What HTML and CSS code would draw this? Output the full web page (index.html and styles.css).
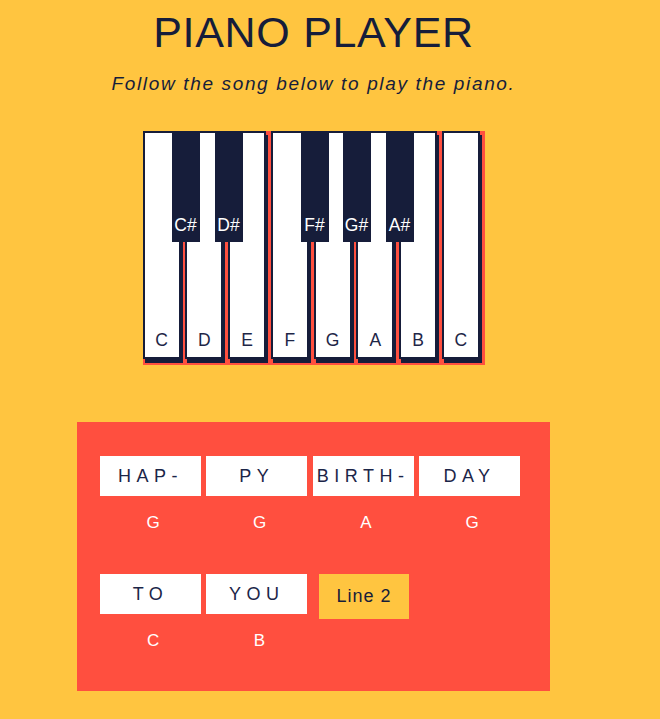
FILE: index.html
```html
<!DOCTYPE html>
<html lang="en">
<head>
<meta charset="utf-8">
<title>Piano Player</title>
<link rel="stylesheet" href="styles.css">
</head>
<body>
<main class="app">
  <h1 class="title">PIANO PLAYER</h1>
  <p class="subtitle">Follow the song below to play the piano.</p>
  <div class="piano">
    <div class="white-key"><span>C</span></div>
    <div class="white-key"><span>D</span></div>
    <div class="white-key"><span>E</span></div>
    <div class="white-key"><span>F</span></div>
    <div class="white-key"><span>G</span></div>
    <div class="white-key"><span>A</span></div>
    <div class="white-key"><span>B</span></div>
    <div class="white-key"><span>C</span></div>
    <div class="black-key key-cs"><span>C#</span></div>
    <div class="black-key key-ds"><span>D#</span></div>
    <div class="black-key key-fs"><span>F#</span></div>
    <div class="black-key key-gs"><span>G#</span></div>
    <div class="black-key key-as"><span>A#</span></div>
  </div>
  <section class="song">
    <div class="line">
      <div class="col"><div class="word">HAP-</div><div class="note">G</div></div>
      <div class="col"><div class="word">PY</div><div class="note">G</div></div>
      <div class="col"><div class="word">BIRTH-</div><div class="note">A</div></div>
      <div class="col"><div class="word">DAY</div><div class="note">G</div></div>
    </div>
    <div class="line">
      <div class="col"><div class="word">TO</div><div class="note">C</div></div>
      <div class="col"><div class="word">YOU</div><div class="note">B</div></div>
      <button class="next-btn" type="button">Line 2</button>
    </div>
  </section>
</main>
</body>
</html>
```
FILE: styles.css
```css
body {
  margin: 0;
  background: #ffc540;
  font-family: "Liberation Sans", Arial, sans-serif;
  color: #161d3a;
}

.app {
  width: 627px;
  padding-top: 8px;
  display: flex;
  flex-direction: column;
  align-items: center;
}

.title {
  margin: 0;
  font-size: 43px;
  font-weight: normal;
  line-height: 49px;
  letter-spacing: 0.7px;
}

.subtitle {
  margin: 16px 0 0;
  font-size: 19px;
  font-style: italic;
  line-height: 22px;
  letter-spacing: 1.65px;
}

.piano {
  position: relative;
  margin-top: 36px;
  width: 342px;
  height: 234px;
  background: #ff4f3f;
  display: flex;
  align-items: flex-start;
}

.white-key {
  box-sizing: border-box;
  flex-shrink: 0;
  width: 38px;
  height: 228px;
  margin-right: 4.75px;
  background: #fff;
  border: 2px solid #161d3a;
  box-shadow: 2px 4px 0 #161d3a;
  display: flex;
  align-items: flex-end;
  justify-content: center;
  padding-bottom: 7px;
  font-size: 17.5px;
  line-height: 20px;
  color: #1e2647;
}

.black-key {
  position: absolute;
  top: 0;
  box-sizing: border-box;
  width: 28px;
  height: 111px;
  background: #161d3a;
  color: #fff;
  display: flex;
  align-items: flex-end;
  justify-content: center;
  padding-bottom: 7px;
  font-size: 17.5px;
  line-height: 20px;
}

.key-cs { left: 29px; }
.key-ds { left: 72px; }
.key-fs { left: 158px; }
.key-gs { left: 200px; }
.key-as { left: 243px; }

.song {
  box-sizing: border-box;
  margin-top: 57px;
  width: 473px;
  height: 269px;
  background: #ff4f3f;
  padding: 34px 0 0 23px;
}

.line {
  display: flex;
  align-items: flex-start;
  height: 118px;
}

.col {
  width: 106.33px;
  flex-shrink: 0;
}

.word {
  width: 101px;
  height: 40px;
  background: #fff;
  display: flex;
  align-items: center;
  justify-content: center;
  font-size: 18px;
  letter-spacing: 5.5px;
  color: #1b2548;
}

.note {
  margin-top: 16.5px;
  text-align: center;
  color: #fff;
  font-size: 17px;
  line-height: 20px;
}

.next-btn {
  margin-left: 6.3px;
  width: 90px;
  height: 45px;
  padding: 0;
  border: none;
  background: #ffc540;
  color: #161d3a;
  font-family: "Liberation Sans", Arial, sans-serif;
  font-size: 18px;
  letter-spacing: 1px;
}
```
